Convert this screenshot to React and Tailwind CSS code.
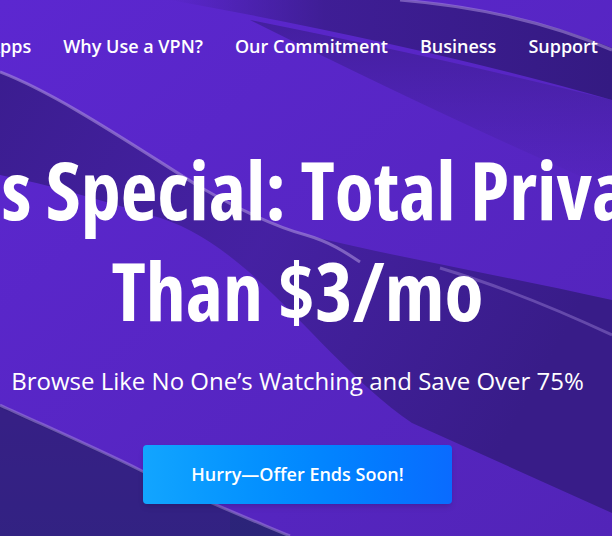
const navLinks = ['Pricing', 'Apps', 'Why Use a VPN?', 'Our Commitment', 'Business', 'Support']

// decorative ribbon background
const Ribbons = () => (
  <svg className="absolute inset-0 w-full h-full" viewBox="0 0 612 536" preserveAspectRatio="none">
    <defs>
      <linearGradient id="base" x1="0" y1="0" x2="1" y2="1">
        <stop offset="0" stopColor="#5c27d0" />
        <stop offset="1" stopColor="#5224b8" />
      </linearGradient>
      <linearGradient id="topBand" x1="0" y1="0" x2="1" y2="0">
        <stop offset="0" stopColor="#3a1c8c" stopOpacity="0" />
        <stop offset="0.35" stopColor="#3a1c8c" stopOpacity="0.85" />
        <stop offset="1" stopColor="#341a82" />
      </linearGradient>
      <linearGradient id="midBand" x1="0" y1="0" x2="1" y2="0.4">
        <stop offset="0" stopColor="#3b1d90" />
        <stop offset="0.5" stopColor="#42209c" stopOpacity="0.85" />
        <stop offset="1" stopColor="#381c88" />
      </linearGradient>
      <linearGradient id="navy" x1="0" y1="0" x2="0" y2="1">
        <stop offset="0" stopColor="#33207f" />
        <stop offset="1" stopColor="#2b2479" />
      </linearGradient>
      <linearGradient id="soft" x1="0" y1="0" x2="0" y2="1">
        <stop offset="0" stopColor="#3a1c8c" stopOpacity="0.7" />
        <stop offset="1" stopColor="#3a1c8c" stopOpacity="0" />
      </linearGradient>
    </defs>
    <rect width="612" height="536" fill="url(#base)" />
    <path d="M250 20 Q450 60 612 100 L612 190 Q450 120 250 20 Z" fill="url(#soft)" />
    <path d="M170 0 L405 0 Q520 10 612 48 L612 100 Q420 45 170 0 Z" fill="url(#topBand)" />
    <path d="M400 0 Q520 10 612 50" fill="none" stroke="#a88ddb" strokeOpacity="0.55" strokeWidth="3" />
    <path
      d="M0 72 C60 95 140 150 200 187 C240 210 280 228 306 235 C400 258 500 275 612 300 L612 513 L412 423 C320 360 250 240 150 215 C100 200 50 185 0 175 Z"
      fill="url(#midBand)"
    />
    <path d="M0 72 C60 95 140 150 200 187 C240 210 280 228 306 235 C330 242 345 252 360 262" fill="none" stroke="#a88ddb" strokeOpacity="0.6" strokeWidth="3" />
    <path d="M440 268 Q520 292 612 335" fill="none" stroke="#9c80d4" strokeOpacity="0.45" strokeWidth="3" />
    <path d="M0 405 C50 428 100 450 140 470 C190 495 240 515 290 536 L0 536 Z" fill="url(#navy)" />
    <path d="M0 408 C50 430 100 452 140 472 C170 487 200 500 230 512 L230 536 L0 536 Z" fill="#3a1f8c" fillOpacity="0.5" />
    <path d="M0 405 C50 428 100 450 140 470 C190 495 240 515 290 536" fill="none" stroke="#a88ddb" strokeOpacity="0.5" strokeWidth="3" />
  </svg>
)

export default function App() {
  return (
    <div className="relative w-full h-[536px] overflow-hidden bg-[#5727c6] text-white font-['Open_Sans',sans-serif]">
      <Ribbons />

      {/* ── Nav ── */}
      <nav className="relative flex justify-end gap-8 pt-[34px] pr-[14px] whitespace-nowrap">
        {navLinks.map((l) => (
          <a key={l} className="shrink-0 text-[18px] leading-[24px] font-semibold">{l}</a>
        ))}
      </nav>

      {/* ── Hero ── */}
      <div className="relative flex flex-col items-center pr-[17px] pt-[80px]">
        <h1 className="flex flex-col items-center font-['Open_Sans',sans-serif] font-stretch-[75%] font-bold text-[80px] leading-[101px] whitespace-nowrap">
          <span className="shrink-0">Spring Deals Special: Total Privacy for Less</span>
          <span className="shrink-0">Than $3/mo</span>
        </h1>
        <p className="mt-[25px] text-[24px] leading-[32px] whitespace-nowrap">
          Browse Like No One’s Watching and Save Over 75%
        </p>
        <button className="mt-[48px] w-[309px] h-[59px] rounded-[4px] bg-linear-to-r from-[#12a5ff] to-[#0a6bff] shadow-md text-[18px] font-semibold">
          Hurry—Offer Ends Soon!
        </button>
      </div>
    </div>
  )
}
